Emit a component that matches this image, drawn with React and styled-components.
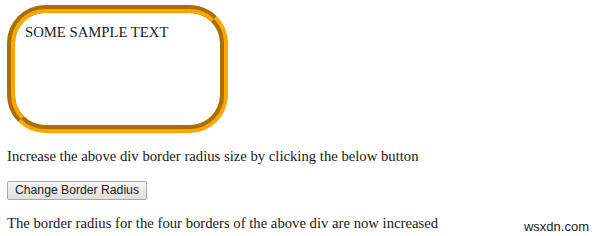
import React from 'react';
import styled, { createGlobalStyle } from 'styled-components';

const GlobalStyle = createGlobalStyle`
  body {
    margin: 0;
    background: #ffffff;
    font-family: "Liberation Serif", "Times New Roman", serif;
    color: #1a1a1a;
  }
`;

const Page = styled.div`
  position: relative;
  width: 600px;
  height: 236px;
  padding: 5px 7px 0;
  box-sizing: border-box;
  overflow: hidden;
`;

const SampleBox = styled.div`
  width: 221px;
  height: 128px;
  box-sizing: border-box;
  padding: 11px 10px;
  border: 8px groove orange;
  border-radius: 38px;
  font-size: 14.7px;
  line-height: 17px;
`;

const Text = styled.p`
  margin: ${(p) => p.$margin || '15px 0'};
  font-size: 14.7px;
  line-height: 17px;
`;

const Button = styled.button`
  display: block;
  height: 19px;
  padding: 0 7px;
  border: 1px solid #a9a9a9;
  border-radius: 2px;
  background: linear-gradient(#f6f6f6, #dedede);
  font-family: "Liberation Sans", Arial, sans-serif;
  font-size: 12.2px;
  color: #222;
  line-height: 17px;
  cursor: pointer;
`;

const Watermark = styled.span`
  position: absolute;
  right: 11px;
  bottom: 2px;
  font-family: "Liberation Sans", Arial, sans-serif;
  font-size: 13px;
  color: #222;
`;

const App = () => (
  <Page>
    <GlobalStyle />
    <SampleBox>SOME SAMPLE TEXT</SampleBox>
    <Text $margin="15px 0 16px">Increase the above div border radius size by clicking the below button</Text>
    <Button>Change Border Radius</Button>
    <Text>The border radius for the four borders of the above div are now increased</Text>
    <Watermark>wsxdn.com</Watermark>
  </Page>
);

export default App;
